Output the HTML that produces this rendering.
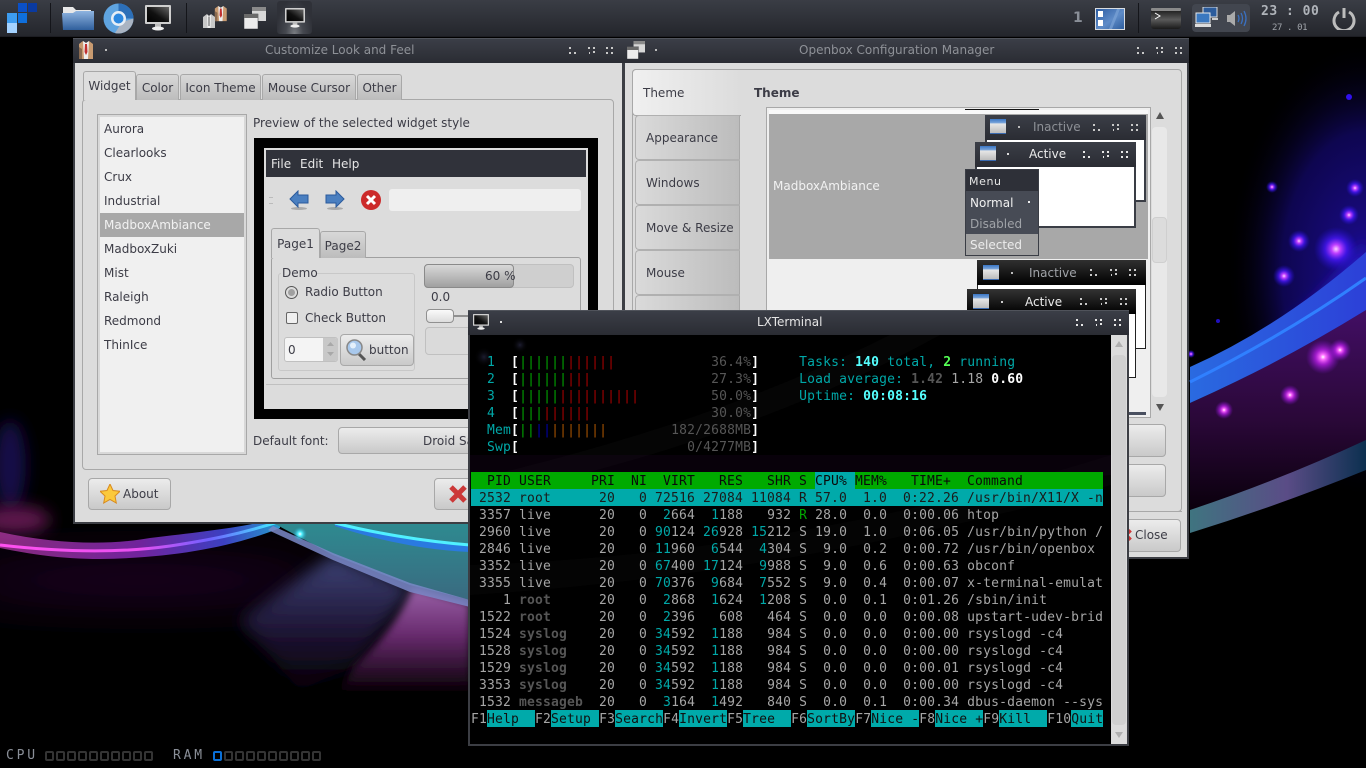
<!DOCTYPE html>
<html>
<head>
<meta charset="utf-8">
<title>Desktop</title>
<style>
html,body{margin:0;padding:0;width:1366px;height:768px;overflow:hidden;background:#000}
body{position:relative;font-family:"DejaVu Sans","Liberation Sans",sans-serif;font-size:12px;color:#3c3c46}
.a{position:absolute;box-sizing:border-box}
.t{position:absolute;white-space:nowrap;line-height:16px;height:16px}
.tb{position:absolute;box-sizing:border-box;background:linear-gradient(#3b3e47,#2a2c33)}
.btn{position:absolute;box-sizing:border-box;border:1px solid #a8a8a8;border-radius:4px;background:linear-gradient(#ececec,#c9c9c9)}
.tab{position:absolute;box-sizing:border-box;border:1px solid #a8a8a8;border-bottom:0;border-radius:3px 3px 0 0;background:linear-gradient(#d8d8d8,#bcbcbc);text-align:center;line-height:27px}
.vt{position:absolute;box-sizing:border-box;left:635px;width:105px;height:45px;border:1px solid #b0b0b0;border-right:1px solid #a8a8a8;border-radius:4px 0 0 4px;background:linear-gradient(90deg,#dadada,#bcbcbc);line-height:45px;padding-left:10px}
svg{position:absolute;display:block}
.pre{position:absolute;margin:0;left:471px;top:353px;width:632px;font-family:"DejaVu Sans Mono","Liberation Mono",monospace;font-size:13px;line-height:19px;letter-spacing:.174px;color:#a6a6a6}
.pre div{height:17px;white-space:pre}
.c{color:#00a8a8}.d{color:#565656;font-weight:bold}.n{color:#565656}.k{color:#00a800}.r{color:#a80000}.u{color:#0000a8}.o{color:#a85400}.w{color:#fff;font-weight:bold}
.C{color:#55ffff;font-weight:bold}.G{color:#55ff55;font-weight:bold}
.hd{background:#00aa00;color:#0a0a0a}.sel{background:#00aaaa;color:#1a1a1a}
.f i{display:inline-block;height:17px;vertical-align:top;background:#00aaaa;color:#111;font-style:normal}
.led{position:absolute;top:751px;width:9px;height:10px;border:2px solid #343434;border-radius:2px;box-sizing:border-box}
</style>
</head>
<body>

<!-- wallpaper -->
<svg style="left:0;top:0" width="1366" height="768" viewBox="0 0 1366 768">
<defs>
<filter id="b4" x="-50%" y="-50%" width="200%" height="200%"><feGaussianBlur stdDeviation="4"/></filter>
<filter id="b8" x="-50%" y="-50%" width="200%" height="200%"><feGaussianBlur stdDeviation="8"/></filter>
<filter id="b25" x="-100%" y="-200%" width="300%" height="500%"><feGaussianBlur stdDeviation="25"/></filter>
<radialGradient id="gp"><stop offset="0" stop-color="#fff"/><stop offset=".15" stop-color="#ff70ff"/><stop offset=".45" stop-color="#c020f0" stop-opacity=".75"/><stop offset="1" stop-color="#8010d0" stop-opacity="0"/></radialGradient>
<radialGradient id="gb"><stop offset="0" stop-color="#ffd0ff"/><stop offset=".2" stop-color="#c040ff"/><stop offset=".5" stop-color="#4a18ff" stop-opacity=".75"/><stop offset="1" stop-color="#2010d0" stop-opacity="0"/></radialGradient>
<radialGradient id="gc"><stop offset="0" stop-color="#fff"/><stop offset=".3" stop-color="#50f0ff"/><stop offset="1" stop-color="#20a0c0" stop-opacity="0"/></radialGradient>
<radialGradient id="navy" cx="1366" cy="270" r="1" gradientUnits="userSpaceOnUse" gradientTransform="translate(1366 270) scale(140 230) translate(-1366 -270)"><stop offset="0" stop-color="#1c0c90"/><stop offset=".6" stop-color="#0e0650"/><stop offset="1" stop-color="#000" stop-opacity="0"/></radialGradient>
<linearGradient id="bandL" x1="0" x2="1" y1="0" y2="0"><stop offset="0" stop-color="#a8359a"/><stop offset=".5" stop-color="#8a2cc0"/><stop offset=".8" stop-color="#4a50f0"/><stop offset="1" stop-color="#30c0ff"/></linearGradient>
<linearGradient id="coreL" x1="0" x2="1" y1="0" y2="0"><stop offset="0" stop-color="#ff50f0"/><stop offset=".5" stop-color="#e850f0"/><stop offset=".75" stop-color="#7060ff"/><stop offset="1" stop-color="#40f0ff"/></linearGradient>
<linearGradient id="wedge" x1="0" y1="0" x2="0" y2="1"><stop offset="0" stop-color="#9a62a8"/><stop offset=".45" stop-color="#6a2c70"/><stop offset="1" stop-color="#0a0008"/></linearGradient>
<linearGradient id="mid" x1="0" y1="0" x2="0" y2="1"><stop offset="0" stop-color="#3e4478"/><stop offset=".6" stop-color="#1c1230"/><stop offset="1" stop-color="#050005"/></linearGradient>
<linearGradient id="tealW" x1="0" y1="0" x2="0" y2="1"><stop offset="0" stop-color="#2e8a90"/><stop offset="1" stop-color="#3a6a80"/></linearGradient>
<linearGradient id="teal2" x1="0" x2="1" y1="0" y2="0"><stop offset="0" stop-color="#3f7480"/><stop offset=".55" stop-color="#5a4c86"/><stop offset="1" stop-color="#0c3050"/></linearGradient>
<linearGradient id="blueB" x1="0" x2="1" y1="0" y2="0"><stop offset="0" stop-color="#2a6ae0"/><stop offset="1" stop-color="#2c40d8"/></linearGradient>
<linearGradient id="pur" x1="0" y1="0" x2="0" y2="1"><stop offset="0" stop-color="#420e64"/><stop offset=".55" stop-color="#2a0838"/><stop offset="1" stop-color="#0a000c"/></linearGradient>
</defs>
<rect width="1366" height="768" fill="#000"/>
<!-- left -->
<ellipse cx="10" cy="465" rx="16" ry="45" fill="#14084a" filter="url(#b8)"/>
<ellipse cx="15" cy="520" rx="35" ry="14" fill="#601850" filter="url(#b8)"/>
<ellipse cx="140" cy="580" rx="190" ry="14" fill="#2e0a38" filter="url(#b25)"/>
<path d="M0 532C60 545 110 545 150 538C200 532 240 528 280 518L280 528C230 548 170 558 100 559C60 559 30 554 0 548Z" fill="url(#bandL)" opacity=".8"/>
<path d="M0 545C60 552 120 553 170 546C210 540 240 534 278 522" fill="none" stroke="url(#coreL)" stroke-width="3"/>
<path d="M333 555L413 587 355 665 300 690 240 620Z" fill="url(#mid)" filter="url(#b8)"/>
<path d="M413 587Q395 630 355 665L340 690H470V603Z" fill="url(#wedge)" filter="url(#b4)"/>
<path d="M275 524H470V600L410 585 333 555Z" fill="url(#tealW)"/>
<path d="M273 526L333 553 410 583 470 600V607L410 592 333 560 268 530Z" fill="#7a88c8" opacity=".85"/>
<path d="M335 522C370 532 420 541 470 544V552C420 550 370 538 335 526Z" fill="#2a7ae0"/>
<path d="M335 523C370 532 420 541 470 545" fill="none" stroke="#50f0ff" stroke-width="3"/>
<circle cx="300" cy="534" r="7" fill="url(#gc)"/>
<!-- right -->
<rect x="1220" y="30" width="146" height="480" fill="url(#navy)"/>
<path d="M1240 362Q1320 310 1366 240V290L1260 372Z" fill="#2a1ad8" filter="url(#b8)"/>
<path d="M1190 403Q1280 363 1366 310V445Q1280 482 1190 510Z" fill="url(#pur)"/>
<path d="M1190 367Q1280 327 1366 252V310Q1280 363 1190 403Z" fill="url(#blueB)"/>
<path d="M1190 382Q1285 335 1366 278" fill="none" stroke="#3080ff" stroke-width="3"/>
<path d="M1190 510Q1280 480 1366 440V470Q1280 505 1190 533Z" fill="url(#teal2)"/>
<circle cx="1349" cy="97" r="3" fill="#3010f0"/>
<circle cx="1272" cy="187" r="6" fill="url(#gb)"/>
<circle cx="1355" cy="188" r="9" fill="url(#gb)"/>
<circle cx="1349" cy="215" r="10" fill="url(#gb)"/>
<circle cx="1299" cy="241" r="11" fill="url(#gb)"/>
<circle cx="1336" cy="249" r="22" fill="url(#gb)"/>
<circle cx="1284" cy="276" r="11" fill="url(#gb)"/>
<circle cx="1218" cy="321" r="2" fill="#2010c0"/>
<circle cx="1191" cy="354" r="4" fill="url(#gb)"/>
<circle cx="1323" cy="357" r="17" fill="url(#gp)"/>
<circle cx="1340" cy="350" r="11" fill="url(#gp)"/>
<circle cx="1290" cy="395" r="10" fill="url(#gp)"/>
<circle cx="1224" cy="410" r="9" fill="url(#gp)"/>
</svg>

<svg width="0" height="0" style="left:0;top:0">
<defs>
<linearGradient id="scr" x1="1" y1="0" x2="0" y2="1"><stop offset="0" stop-color="#666"/><stop offset=".55" stop-color="#111"/><stop offset="1" stop-color="#000"/></linearGradient>
<linearGradient id="win" x1="0" y1="0" x2="0" y2="1"><stop offset="0" stop-color="#3a76c4"/><stop offset=".28" stop-color="#7fa8dc"/><stop offset=".3" stop-color="#e8e8e8"/><stop offset="1" stop-color="#b8b8b8"/></linearGradient>
<symbol id="mon" viewBox="0 0 26 26"><rect x="0" y="0" width="26" height="19" rx="1" fill="#cfcfcf"/><rect x="2" y="2" width="22" height="15" fill="url(#scr)"/><rect x="10" y="19" width="6" height="3" fill="#bbb"/><ellipse cx="13" cy="23.5" rx="6" ry="2" fill="#eee"/></symbol>
<symbol id="wi" viewBox="0 0 16 16"><rect width="16" height="15" fill="url(#win)"/><rect y="14" width="16" height="1" fill="#3a6ab0"/></symbol>
<symbol id="b1" viewBox="0 0 7 7"><path d="M0 0h2v2H0zM0 5h2v2H0zM5 5h2v2H5z" fill="currentColor"/></symbol>
<symbol id="b2" viewBox="0 0 7 7"><path d="M0 0h2v2H0zM5 0h2v2H5zM5 4h2v2H5zM1 5h1v2H1z" fill="currentColor"/></symbol>
<symbol id="b3" viewBox="0 0 7 7"><path d="M0 0h2v2H0zM5 0h2v2H5zM0 5h2v2H0zM5 5h2v2H5z" fill="currentColor"/></symbol>
<symbol id="ward" viewBox="0 0 16 18"><path d="M1 3L5 0 8 2 11 0 15 3V18H1Z" fill="#c89a70"/><path d="M5 0L8 2 11 0 10 18H6Z" fill="#eee"/><path d="M7 3H9L9.5 11 8 14 6.500 11Z" fill="#c03030"/><path d="M1 6V18H4V8Z" fill="#8a6a50"/></symbol>
<symbol id="winst" viewBox="0 0 22 22"><rect x="8" y="0" width="14" height="14" fill="#d8d8d8"/><rect x="8" y="0" width="14" height="4" fill="#8a8a8a"/><rect x="0" y="7" width="14" height="15" fill="#ececec" stroke="#2a2c33" stroke-width=".5"/><rect x="0" y="7" width="14" height="4" fill="#6a6a6a"/></symbol>
</defs>
</svg>

<!-- panel -->
<div class="a" style="left:0;top:0;width:1366px;height:37px;background:linear-gradient(#3a3d45,#24262c);border-bottom:1px solid #1c1d22"></div>
<div class="a" style="left:7px;top:13px;width:10px;height:10px;background:#3d9cf0"></div>
<div class="a" style="left:7px;top:23px;width:10px;height:10px;background:#a4d2ff"></div>
<div class="a" style="left:18px;top:3px;width:9px;height:9px;background:#0a50c8"></div>
<div class="a" style="left:18px;top:13px;width:9px;height:10px;background:#0f6fdc"></div>
<div class="a" style="left:28px;top:3px;width:9px;height:9px;background:#0a3aa0"></div>
<div class="a" style="left:50px;top:3px;width:1px;height:30px;background:#14151a"></div>
<div class="a" style="left:186px;top:3px;width:1px;height:30px;background:#14151a"></div>
<svg style="left:62px;top:5px" width="32" height="26" viewBox="0 0 32 26"><defs><linearGradient id="fd" x1="0" y1="0" x2="0" y2="1"><stop offset="0" stop-color="#8fb4e0"/><stop offset="1" stop-color="#2f5f9c"/></linearGradient></defs><path d="M1 2H11L14 5H29V10H1Z" fill="#e8e8e8"/><path d="M0 8H11L14 6H32V25H1Z" fill="url(#fd)"/></svg>
<svg style="left:103px;top:3px" width="31" height="31" viewBox="0 0 31 31"><circle cx="15.500" cy="15.500" r="15" fill="#5fa4e0"/><path d="M15.500 .5A15 15 0 0 1 30.500 15.500H21A6 6 0 0 0 15.500 9.500Z" fill="#2c6fb8"/><path d="M30.500 15.500A15 15 0 0 1 12 30L19 19Z" fill="#aab4c2"/><circle cx="15.500" cy="15.500" r="7.500" fill="#e6eef6"/><circle cx="15.500" cy="15.500" r="5" fill="#2c88e0"/></svg>
<svg style="left:145px;top:5px" width="26" height="26"><use href="#mon" width="26" height="26"/></svg>
<svg style="left:203px;top:6px" width="25" height="23" viewBox="0 0 25 23"><g transform="translate(11 0) scale(.85)"><use href="#ward" width="16" height="18"/></g><path d="M0 11L4 8 6 10 8 8 12 11V22H0Z" fill="#c8c8c8"/><path d="M4 9L6 10 8 9 7.500 22H4.500Z" fill="#f0f0f0"/><path d="M5.500 10.500H6.500V20H5.500Z" fill="#555"/></svg>
<svg style="left:244px;top:7px" width="22" height="22"><use href="#winst" width="22" height="22"/></svg>
<div class="a" style="left:277px;top:1px;width:35px;height:33px;border-radius:3px;background:radial-gradient(ellipse at 50% 100%,#7a7d82 0,#45484f 35%,#2f3138 75%)"></div>
<svg style="left:285px;top:8px" width="20" height="20"><use href="#mon" width="20" height="20"/></svg>

<div class="t" style="left:1073px;top:9px;font-size:14px;font-weight:bold;color:#8a8f98;line-height:18px;height:18px">1</div>
<svg style="left:1095px;top:8px" width="30" height="22" viewBox="0 0 30 22"><defs><linearGradient id="pg" x1="0" y1="0" x2="1" y2="1"><stop offset="0" stop-color="#2a5aa0"/><stop offset=".55" stop-color="#5f8cc8"/><stop offset="1" stop-color="#2c5c9c"/></linearGradient></defs><rect x=".5" y=".5" width="29" height="21" fill="url(#pg)" stroke="#d8dce0"/><path d="M14 21L22 1H25L17 21Z" fill="#7ba2d6" opacity=".7"/><path d="M3 3H8V9H3ZM3 12H8V18H3Z" fill="#fff"/></svg>
<div class="a" style="left:1138px;top:3px;width:1px;height:30px;background:#14151a"></div>
<svg style="left:1151px;top:8px" width="30" height="21" viewBox="0 0 30 21"><defs><linearGradient id="tg" x1="0" y1="0" x2="0" y2="1"><stop offset="0" stop-color="#111"/><stop offset=".55" stop-color="#5a5a5a"/><stop offset="1" stop-color="#1a1a1a"/></linearGradient></defs><rect x="0" y="0" width="30" height="21" rx="3" fill="url(#tg)"/><rect x="0" y="0" width="30" height="3" rx="1" fill="#8a8a8a"/><path d="M4 5L9 8 4 11" fill="none" stroke="#fff" stroke-width="1"/></svg>
<div class="a" style="left:1192px;top:4px;width:58px;height:28px;border-radius:4px;background:#42464f"></div>
<svg style="left:1195px;top:7px" width="24" height="21" viewBox="0 0 24 21"><rect x="8" y="0" width="14" height="10" fill="#2c5c9c" stroke="#ddd"/><rect x="1" y="6" width="14" height="10" fill="#3a78c0" stroke="#e8e8e8"/><rect x="0" y="17" width="16" height="3" fill="#ddd"/><rect x="17" y="11" width="6" height="2" fill="#ccc"/></svg>
<svg style="left:1227px;top:10px" width="22" height="17" viewBox="0 0 22 17"><path d="M0 5H3L8 1V16L3 12H0Z" fill="#aaa"/><path d="M11 5Q13 8.500 11 12M14 3Q17 8.500 14 14M17 1Q21 8.500 17 16" fill="none" stroke="#3a70c0" stroke-width="1.300"/></svg>
<div class="t" style="left:1261px;top:3px;font-size:13px;font-weight:bold;letter-spacing:.5px;color:#b0b4ba;line-height:18px;height:18px;font-family:'DejaVu Sans Mono',monospace">23 : 00</div>
<div class="t" style="left:1272px;top:21px;font-size:9px;color:#a0a4aa;letter-spacing:-.4px;line-height:14px;height:14px;font-family:'DejaVu Sans Mono',monospace">27 . 01</div>
<svg style="left:1332px;top:7px" width="24" height="23" viewBox="0 0 24 23"><path d="M7 5A10 10 0 1 0 17 5" fill="none" stroke="#bcbcbc" stroke-width="3"/><path d="M12 1V11" stroke="#bcbcbc" stroke-width="3"/></svg>

<!-- left window -->
<div class="a" style="left:73px;top:38px;width:551px;height:486px;background:#dcdcdc;border:2px solid #3c3e44;border-top:0"></div>
<div class="tb" style="left:73px;top:38px;width:551px;height:25px;border-top:1px solid #50535b"></div>
<svg style="left:78px;top:41px" width="16" height="18"><use href="#ward" width="16" height="18"/></svg>
<div class="a" style="left:105px;top:49px;width:2px;height:2px;background:#bbb"></div>
<div class="t" style="left:265px;top:42px;color:#8e9197">Customize Look and Feel</div>
<svg style="left:569px;top:47px;color:#c8c8c8" width="7" height="7"><use href="#b1" width="7" height="7"/></svg>
<svg style="left:588px;top:47px;color:#c8c8c8" width="7" height="7"><use href="#b2" width="7" height="7"/></svg>
<svg style="left:606px;top:47px;color:#c8c8c8" width="7" height="7"><use href="#b3" width="7" height="7"/></svg>

<div class="a" style="left:82px;top:99px;width:532px;height:371px;border:1px solid #a8a8a8;border-radius:4px"></div>
<div class="tab" style="left:136px;top:74px;width:43px;height:26px">Color</div>
<div class="tab" style="left:180px;top:74px;width:81px;height:26px">Icon Theme</div>
<div class="tab" style="left:262px;top:74px;width:94px;height:26px">Mouse Cursor</div>
<div class="tab" style="left:357px;top:74px;width:45px;height:26px">Other</div>
<div class="tab" style="left:83px;top:71px;width:53px;height:29px;background:#dedede;line-height:29px">Widget</div>

<div class="a" style="left:97px;top:114px;width:150px;height:341px;background:#f0f0f0;border:1px solid #a8a8a8;box-shadow:inset 0 0 0 2px #d8d8d8"></div>
<div class="a" style="left:100px;top:213px;width:144px;height:24px;background:#a8a8a8"></div>
<div class="t" style="left:104px;top:121px">Aurora</div>
<div class="t" style="left:104px;top:145px">Clearlooks</div>
<div class="t" style="left:104px;top:169px">Crux</div>
<div class="t" style="left:104px;top:193px">Industrial</div>
<div class="t" style="left:104px;top:217px;color:#f2f2f2">MadboxAmbiance</div>
<div class="t" style="left:104px;top:241px">MadboxZuki</div>
<div class="t" style="left:104px;top:265px">Mist</div>
<div class="t" style="left:104px;top:289px">Raleigh</div>
<div class="t" style="left:104px;top:313px">Redmond</div>
<div class="t" style="left:104px;top:337px">ThinIce</div>

<div class="t" style="left:253px;top:115px">Preview of the selected widget style</div>
<div class="a" style="left:254px;top:138px;width:344px;height:281px;background:#dcdcdc;border:10px solid #000"></div>
<div class="a" style="left:266px;top:150px;width:320px;height:27px;background:#30323a"></div>
<div class="t" style="left:271px;top:156px;color:#e6e6e6">File</div>
<div class="t" style="left:300px;top:156px;color:#e6e6e6">Edit</div>
<div class="t" style="left:332px;top:156px;color:#e6e6e6">Help</div>
<div class="a" style="left:269px;top:197px;width:4px;height:7px;border-top:1px solid #bbb;border-bottom:1px solid #bbb"></div>
<svg style="left:289px;top:190px" width="20" height="20" viewBox="0 0 20 20"><ellipse cx="10" cy="18.500" rx="8" ry="1.500" fill="#aaa"/><path d="M1 9L9 1V5H19V13H9V17Z" fill="#4a7fc0" stroke="#2a5a9c"/></svg>
<svg style="left:325px;top:190px" width="20" height="20" viewBox="0 0 20 20"><ellipse cx="10" cy="18.500" rx="8" ry="1.500" fill="#aaa"/><path d="M19 9L11 1V5H1V13H11V17Z" fill="#4a7fc0" stroke="#2a5a9c"/></svg>
<svg style="left:361px;top:190px" width="20" height="20" viewBox="0 0 20 20"><circle cx="10" cy="10" r="10" fill="#cc2a2a"/><path d="M6 6L14 14M14 6L6 14" stroke="#fff" stroke-width="3"/></svg>
<div class="a" style="left:389px;top:189px;width:192px;height:22px;background:#efefef;border-radius:3px"></div>

<div class="a" style="left:271px;top:257px;width:310px;height:122px;border:1px solid #a0a0a0;border-radius:3px"></div>
<div class="tab" style="left:320px;top:231px;width:46px;height:27px;line-height:29px">Page2</div>
<div class="tab" style="left:271px;top:228px;width:49px;height:30px;background:#dcdcdc;line-height:30px">Page1</div>
<div class="a" style="left:278px;top:273px;width:137px;height:98px;border:1px solid #c8c8c8;border-radius:3px"></div>
<div class="a" style="left:281px;top:266px;width:36px;height:12px;background:#dcdcdc"></div>
<div class="t" style="left:282px;top:265px">Demo</div>
<svg style="left:285px;top:286px" width="13" height="13" viewBox="0 0 13 13"><circle cx="6.500" cy="6.500" r="6" fill="#dcdcdc" stroke="#555"/><circle cx="6.500" cy="6.500" r="3.500" fill="#a0a0a0"/></svg>
<div class="t" style="left:305px;top:284px">Radio Button</div>
<div class="a" style="left:286px;top:312px;width:12px;height:12px;background:#f0f0f0;border:1px solid #666;border-radius:2px"></div>
<div class="t" style="left:305px;top:310px">Check Button</div>
<div class="a" style="left:284px;top:337px;width:54px;height:25px;background:#f4f4f4;border:1px solid #c0c0c0;border-radius:3px"></div>
<div class="a" style="left:323px;top:338px;width:15px;height:23px;background:#c8c8c8;border-radius:0 3px 3px 0"></div>
<div class="t" style="left:288px;top:342px">0</div>
<svg style="left:327px;top:342px" width="7" height="14"><path d="M3.500 0L7 4H0ZM3.500 14L7 10H0Z" fill="#a8a8a8"/></svg>
<div class="btn" style="left:340px;top:334px;width:74px;height:32px"></div>
<svg style="left:346px;top:339px" width="21" height="22" viewBox="0 0 21 22"><path d="M12 14L19 21" stroke="#555" stroke-width="3"/><circle cx="8.500" cy="8.500" r="7.500" fill="#a8c8ec" stroke="#888" stroke-width="1.500"/><circle cx="7" cy="6.500" r="3" fill="#e4f0fb"/></svg>
<div class="t" style="left:369px;top:342px">button</div>
<div class="a" style="left:424px;top:264px;width:150px;height:24px;background:#cfcfcf;border:1px solid #c0c0c0;border-radius:4px"></div>
<div class="a" style="left:424px;top:264px;width:90px;height:24px;background:linear-gradient(#d8d8d8,#a0a0a0);border:1px solid #8a8a8a;border-radius:4px"></div>
<div class="t" style="left:485px;top:268px">60 %</div>
<div class="t" style="left:431px;top:289px">0.0</div>
<div class="a" style="left:450px;top:315px;width:20px;height:2px;background:#909090"></div>
<div class="a" style="left:426px;top:309px;width:28px;height:14px;background:linear-gradient(#fafafa,#dcdcdc);border:1px solid #909090;border-radius:4px"></div>
<div class="a" style="left:425px;top:327px;width:50px;height:28px;background:#dadada;border:1px solid #c0c0c0;border-radius:4px"></div>
<div class="a" style="left:266px;top:384px;width:320px;height:1px;background:#c0c0c0"></div>

<div class="t" style="left:253px;top:433px">Default font:</div>
<div class="btn" style="left:338px;top:427px;width:200px;height:27px"></div>
<div class="t" style="left:423px;top:433px">Droid Sans</div>

<div class="btn" style="left:88px;top:478px;width:83px;height:32px"></div>
<svg style="left:100px;top:484px" width="20" height="20" viewBox="0 0 20 20"><path d="M10 0L13 6.500 20 7.300 15 12 16.300 19 10 15.500 3.700 19 5 12 0 7.300 7 6.500Z" fill="#fbc93c" stroke="#d88a20"/></svg>
<div class="t" style="left:123px;top:486px">About</div>
<div class="btn" style="left:434px;top:478px;width:60px;height:32px"></div>
<svg style="left:449px;top:485px" width="18" height="18" viewBox="0 0 18 18"><path d="M2 2L16 16M16 2L2 16" stroke="#cc3838" stroke-width="5"/></svg>

<!-- right window -->
<div class="a" style="left:623px;top:38px;width:566px;height:521px;background:#dcdcdc;border:2px solid #3c3e44;border-top:0"></div>
<div class="tb" style="left:623px;top:38px;width:566px;height:25px;border-top:1px solid #50535b"></div>
<svg style="left:627px;top:41px" width="18" height="18"><use href="#winst" width="18" height="18"/></svg>
<div class="a" style="left:655px;top:49px;width:2px;height:2px;background:#bbb"></div>
<div class="t" style="left:799px;top:42px;color:#8e9197">Openbox Configuration Manager</div>
<svg style="left:1137px;top:47px;color:#c8c8c8" width="7" height="7"><use href="#b1" width="7" height="7"/></svg>
<svg style="left:1156px;top:47px;color:#c8c8c8" width="7" height="7"><use href="#b2" width="7" height="7"/></svg>
<svg style="left:1175px;top:47px;color:#c8c8c8" width="7" height="7"><use href="#b3" width="7" height="7"/></svg>

<div class="a" style="left:632px;top:69px;width:550px;height:443px;border:1px solid #a8a8a8;border-radius:4px"></div>
<div class="a" style="left:632px;top:69px;width:109px;height:47px;background:linear-gradient(90deg,#f0f0f0,#dcdcdc);border:1px solid #a8a8a8;border-right:0;border-radius:4px 0 0 4px"></div>
<div class="t" style="left:643px;top:85px">Theme</div>
<div class="vt" style="top:115px">Appearance</div>
<div class="vt" style="top:160px">Windows</div>
<div class="vt" style="top:205px">Move &amp; Resize</div>
<div class="vt" style="top:250px">Mouse</div>
<div class="vt" style="top:295px"></div>
<div class="t" style="left:754px;top:85px;font-weight:bold">Theme</div>

<div class="a" style="left:766px;top:107px;width:385px;height:311px;background:#efefef;border:1px solid #a8a8a8"></div>
<div class="a" style="left:769px;top:110px;width:379px;height:4px;background:#f8f8f8"></div>
<div class="a" style="left:965px;top:109px;width:74px;height:1px;background:#111"></div>
<div class="a" style="left:769px;top:114px;width:379px;height:145px;background:#a8a8a8"></div>
<div class="t" style="left:773px;top:178px;color:#f2f2f2">MadboxAmbiance</div>

<div class="a" style="left:985px;top:115px;width:161px;height:87px;background:#fff;border:2px solid #3a3d45"></div>
<div class="tb" style="left:985px;top:115px;width:161px;height:25px"></div>
<svg style="left:990px;top:119px" width="16" height="16"><use href="#wi" width="16" height="16"/></svg>
<div class="a" style="left:1018px;top:126px;width:2px;height:2px;background:#bbb"></div>
<div class="t" style="left:1033px;top:119px;color:#8e9197">Inactive</div>
<svg style="left:1093px;top:124px;color:#c8c8c8" width="7" height="7"><use href="#b1" width="7" height="7"/></svg>
<svg style="left:1112px;top:124px;color:#c8c8c8" width="7" height="7"><use href="#b2" width="7" height="7"/></svg>
<svg style="left:1131px;top:124px;color:#c8c8c8" width="7" height="7"><use href="#b3" width="7" height="7"/></svg>

<div class="a" style="left:975px;top:142px;width:161px;height:86px;background:#fff;border:2px solid #3a3d45"></div>
<div class="tb" style="left:975px;top:142px;width:161px;height:25px"></div>
<svg style="left:980px;top:146px" width="16" height="16"><use href="#wi" width="16" height="16"/></svg>
<div class="a" style="left:1007px;top:153px;width:2px;height:2px;background:#ddd"></div>
<div class="t" style="left:1029px;top:146px;color:#ececec">Active</div>
<svg style="left:1083px;top:151px;color:#e8e8e8" width="7" height="7"><use href="#b1" width="7" height="7"/></svg>
<svg style="left:1102px;top:151px;color:#e8e8e8" width="7" height="7"><use href="#b2" width="7" height="7"/></svg>
<svg style="left:1121px;top:151px;color:#e8e8e8" width="7" height="7"><use href="#b3" width="7" height="7"/></svg>

<div class="a" style="left:965px;top:169px;width:74px;height:87px;background:#474b55;border:1px solid #3a3d45"></div>
<div class="a" style="left:966px;top:170px;width:72px;height:21px;background:#2e3038"></div>
<div class="t" style="left:969px;top:174px;color:#e8e8e8;font-size:11px;letter-spacing:.6px">Menu</div>
<div class="t" style="left:970px;top:195px;color:#f0f0f0">Normal</div>
<div class="a" style="left:1028px;top:201px;width:2px;height:2px;background:#eee"></div>
<div class="t" style="left:970px;top:216px;color:#a0a3a8">Disabled</div>
<div class="a" style="left:966px;top:234px;width:72px;height:21px;background:#a0a0a0"></div>
<div class="t" style="left:970px;top:237px;color:#ececec">Selected</div>

<div class="a" style="left:977px;top:260px;width:169px;height:89px;background:#fff;border:1px solid #222"></div>
<div class="a" style="left:977px;top:260px;width:169px;height:25px;background:linear-gradient(#303030,#000)"></div>
<svg style="left:983px;top:265px" width="16" height="16"><use href="#wi" width="16" height="16"/></svg>
<div class="a" style="left:1011px;top:272px;width:2px;height:2px;background:#bbb"></div>
<div class="t" style="left:1029px;top:265px;color:#a0a3a8">Inactive</div>
<svg style="left:1090px;top:269px;color:#c8c8c8" width="7" height="7"><use href="#b1" width="7" height="7"/></svg>
<svg style="left:1110px;top:269px;color:#c8c8c8" width="7" height="7"><use href="#b2" width="7" height="7"/></svg>
<svg style="left:1129px;top:269px;color:#c8c8c8" width="7" height="7"><use href="#b3" width="7" height="7"/></svg>

<div class="a" style="left:967px;top:289px;width:169px;height:89px;background:#fff;border:1px solid #222"></div>
<div class="a" style="left:967px;top:289px;width:169px;height:25px;background:linear-gradient(#333,#000)"></div>
<svg style="left:973px;top:294px" width="16" height="16"><use href="#wi" width="16" height="16"/></svg>
<div class="a" style="left:1001px;top:301px;width:2px;height:2px;background:#ccc"></div>
<div class="t" style="left:1025px;top:294px;color:#ececec">Active</div>
<svg style="left:1080px;top:298px;color:#c8c8c8" width="7" height="7"><use href="#b1" width="7" height="7"/></svg>
<svg style="left:1100px;top:298px;color:#c8c8c8" width="7" height="7"><use href="#b2" width="7" height="7"/></svg>
<svg style="left:1120px;top:298px;color:#c8c8c8" width="7" height="7"><use href="#b3" width="7" height="7"/></svg>

<div class="a" style="left:1125px;top:412px;width:21px;height:3px;background:#4a5060"></div>
<svg style="left:1156px;top:112px" width="8" height="7"><path d="M4 0L8 7H0Z" fill="#555"/></svg>
<div class="a" style="left:1152px;top:127px;width:15px;height:270px;background:#e8e8e8;border-radius:4px"></div>
<div class="a" style="left:1152px;top:217px;width:15px;height:46px;background:#dcdcdc;border:1px solid #cfcfcf;border-radius:4px"></div>
<svg style="left:1156px;top:404px" width="8" height="7"><path d="M4 7L8 0H0Z" fill="#555"/></svg>

<div class="btn" style="left:1000px;top:424px;width:166px;height:33px"></div>
<div class="btn" style="left:1000px;top:464px;width:166px;height:33px"></div>
<div class="a" style="left:632px;top:511px;width:550px;height:1px;background:#a8a8a8"></div>
<div class="btn" style="left:1050px;top:519px;width:131px;height:33px"></div>
<svg style="left:1120px;top:526px" width="12" height="18" viewBox="0 0 18 18"><path d="M2 2L16 16M16 2L2 16" stroke="#cc3838" stroke-width="5"/></svg>
<div class="t" style="left:1135px;top:527px">Close</div>

<!-- terminal -->
<div class="a" style="left:468px;top:310px;width:661px;height:436px;background:#000;border:2px solid #3c3e44;border-top:0"></div>
<svg style="left:470px;top:335px" width="641px" height="409" viewBox="0 0 641 409"><defs><radialGradient id="fs"><stop offset="0" stop-color="#3a3a60" stop-opacity=".5"/><stop offset="1" stop-color="#000" stop-opacity="0"/></radialGradient></defs><circle cx="14" cy="22" r="10" fill="url(#fs)"/><circle cx="50" cy="10" r="8" fill="url(#fs)"/><path d="M0 145Q240 90 420 0H470Q270 110 0 165Z" fill="#fff" opacity=".02"/><path d="M0 230Q320 220 641 120V150Q320 240 0 260Z" fill="#fff" opacity=".015"/><path d="M0 120H641V140Q320 170 0 145Z" fill="#400a50" opacity=".12"/></svg>
<div class="tb" style="left:468px;top:310px;width:661px;height:25px;border-top:1px solid #50535b"></div>
<svg style="left:473px;top:314px" width="16" height="16"><use href="#mon" width="16" height="16"/></svg>
<div class="a" style="left:500px;top:321px;width:2px;height:2px;background:#ddd"></div>
<div class="t" style="left:757px;top:314px;color:#e4e4e4">LXTerminal</div>
<svg style="left:1076px;top:319px;color:#e8e8e8" width="7" height="7"><use href="#b1" width="7" height="7"/></svg>
<svg style="left:1095px;top:319px;color:#e8e8e8" width="7" height="7"><use href="#b2" width="7" height="7"/></svg>
<svg style="left:1114px;top:319px;color:#e8e8e8" width="7" height="7"><use href="#b3" width="7" height="7"/></svg>
<div class="a" style="left:1111px;top:335px;width:16px;height:409px;background:#dcdcdc"></div>
<div class="a" style="left:1112px;top:355px;width:14px;height:370px;background:#d0d0d0;border-radius:4px"></div>
<svg style="left:1115px;top:341px" width="8" height="6"><path d="M4 0L8 6H0Z" fill="#b0b0b0"/></svg>
<svg style="left:1115px;top:732px" width="8" height="6"><path d="M4 6L8 0H0Z" fill="#b0b0b0"/></svg>

<div class="pre">
<div>  <span class="c">1</span>  <span class="w">[</span><span class="k">||||||</span><span class="r">||||||</span>            <span class="n">36.4%</span><span class="w">]</span>     <span class="c">Tasks: </span><span class="C">140</span><span class="c"> total, </span><span class="G">2</span><span class="c"> running</span></div>
<div>  <span class="c">2</span>  <span class="w">[</span><span class="k">||||||</span><span class="r">|||</span>               <span class="n">27.3%</span><span class="w">]</span>     <span class="c">Load average: </span><span class="d">1.42 </span>1.18 <span class="w">0.60</span></div>
<div>  <span class="c">3</span>  <span class="w">[</span><span class="k">|||||</span><span class="r">||||||||||</span>         <span class="n">50.0%</span><span class="w">]</span>     <span class="c">Uptime: </span><span class="C">00:08:16</span></div>
<div>  <span class="c">4</span>  <span class="w">[</span><span class="k">|||</span><span class="r">||||||</span>               <span class="n">30.0%</span><span class="w">]</span></div>
<div>  <span class="c">Mem</span><span class="w">[</span><span class="k">||</span><span class="u">||</span><span class="o">|||||||</span>        <span class="n">182/2688MB</span><span class="w">]</span></div>
<div>  <span class="c">Swp</span><span class="w">[</span>                     <span class="n">0/4277MB</span><span class="w">]</span></div>
<div> </div>
<div class="hd">  PID USER     PRI  NI  VIRT   RES   SHR S <span style="background:#00aaaa;display:inline-block;height:17px;vertical-align:top">CPU% </span>MEM%   TIME+  Command</div>
<div class="sel"> 2532 root      20   0 72516 27084 11084 R 57.0  1.0  0:22.26 /usr/bin/X11/X -n</div>
<div> 3357 live      20   0  <span class="c">2</span>664  <span class="c">1</span>188   932 <span class="k">R</span> 28.0  0.0  0:00.06 htop</div>
<div> 2960 live      20   0 <span class="c">90</span>124 <span class="c">26</span>928 <span class="c">15</span>212 S 19.0  1.0  0:06.05 /usr/bin/python /</div>
<div> 2846 live      20   0 <span class="c">11</span>960  <span class="c">6</span>544  <span class="c">4</span>304 S  9.0  0.2  0:00.72 /usr/bin/openbox</div>
<div> 3352 live      20   0 <span class="c">67</span>400 <span class="c">17</span>124  <span class="c">9</span>988 S  9.0  0.6  0:00.63 obconf</div>
<div> 3355 live      20   0 <span class="c">70</span>376  <span class="c">9</span>684  <span class="c">7</span>552 S  9.0  0.4  0:00.07 x-terminal-emulat</div>
<div>    1 <span class="d">root</span>      20   0  <span class="c">2</span>868  <span class="c">1</span>624  <span class="c">1</span>208 S  0.0  0.1  0:01.26 /sbin/init</div>
<div> 1522 <span class="d">root</span>      20   0  <span class="c">2</span>396   608   464 S  0.0  0.0  0:00.08 upstart-udev-brid</div>
<div> 1524 <span class="d">syslog</span>    20   0 <span class="c">34</span>592  <span class="c">1</span>188   984 S  0.0  0.0  0:00.00 rsyslogd -c4</div>
<div> 1528 <span class="d">syslog</span>    20   0 <span class="c">34</span>592  <span class="c">1</span>188   984 S  0.0  0.0  0:00.00 rsyslogd -c4</div>
<div> 1529 <span class="d">syslog</span>    20   0 <span class="c">34</span>592  <span class="c">1</span>188   984 S  0.0  0.0  0:00.01 rsyslogd -c4</div>
<div> 3353 <span class="d">syslog</span>    20   0 <span class="c">34</span>592  <span class="c">1</span>188   984 S  0.0  0.0  0:00.00 rsyslogd -c4</div>
<div> 1532 <span class="d">messageb</span>  20   0  <span class="c">3</span>164  <span class="c">1</span>492   840 S  0.0  0.1  0:00.34 dbus-daemon --sys</div>
<div class="f">F1<i>Help  </i>F2<i>Setup </i>F3<i>Search</i>F4<i>Invert</i>F5<i>Tree  </i>F6<i>SortBy</i>F7<i>Nice -</i>F8<i>Nice +</i>F9<i>Kill  </i>F10<i>Quit</i></div>
</div>

<!-- conky -->
<div class="t" style="left:6px;top:748px;font-size:13px;letter-spacing:2.8px;color:#8a8f98;font-family:'DejaVu Sans Mono',monospace">CPU</div>
<div class="led" style="left:45px"></div><div class="led" style="left:56px"></div><div class="led" style="left:67px"></div><div class="led" style="left:78px"></div><div class="led" style="left:89px"></div><div class="led" style="left:100px"></div><div class="led" style="left:111px"></div><div class="led" style="left:122px"></div><div class="led" style="left:133px"></div><div class="led" style="left:144px"></div>
<div class="t" style="left:173px;top:748px;font-size:13px;letter-spacing:2.8px;color:#8a8f98;font-family:'DejaVu Sans Mono',monospace">RAM</div>
<div class="led" style="left:213px;border-color:#0a70d8"></div><div class="led" style="left:224px"></div><div class="led" style="left:235px"></div><div class="led" style="left:246px"></div><div class="led" style="left:257px"></div><div class="led" style="left:268px"></div><div class="led" style="left:279px"></div><div class="led" style="left:290px"></div><div class="led" style="left:301px"></div><div class="led" style="left:312px"></div>
</body>
</html>
